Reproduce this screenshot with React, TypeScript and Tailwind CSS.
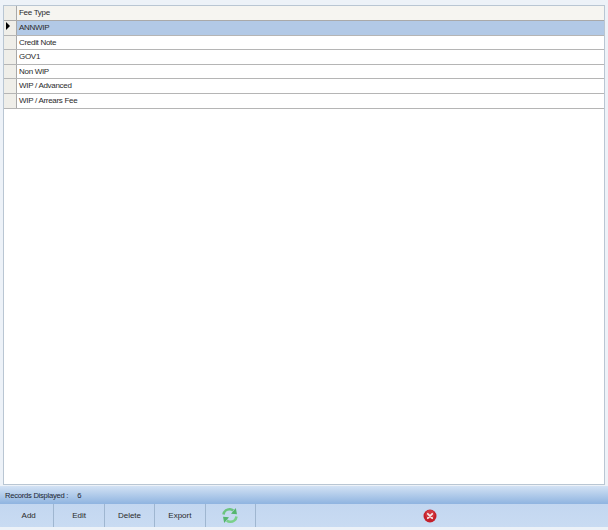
const rows = ["ANNWIP", "Credit Note", "GOV1", "Non WIP", "WIP / Advanced", "WIP / Arrears Fee"];
const buttons = ["Add", "Edit", "Delete", "Export"];

function RefreshIcon() {
  return (
    <svg width="18" height="17" viewBox="0 0 18 17" fill="none">
      <path d="M2.5 7.5 C3 4 6 2 9 2.2 C10.2 2.3 11.2 2.8 12.2 3.6" stroke="#6cc47f" strokeWidth="2.6" />
      <path d="M10 6.8 L16 7.2 L14.8 1 Z" fill="#55b56e" />
      <path d="M15.5 9.5 C15 13 12 15 9 14.8 C7.8 14.7 6.8 14.2 5.8 13.4" stroke="#7ad08a" strokeWidth="2.6" />
      <path d="M8 10.2 L2 9.8 L3.2 16 Z" fill="#55b56e" />
    </svg>
  );
}

function CloseIcon() {
  return (
    <svg width="14" height="14" viewBox="0 0 14 14">
      <circle cx="7" cy="7" r="6.5" fill="#c4202a" />
      <circle cx="7" cy="5.5" r="4.5" fill="#dc4a50" opacity="0.6" />
      <path d="M4.8 4.8 L9.2 9.2 M9.2 4.8 L4.8 9.2" stroke="#f7e8e8" strokeWidth="1.8" strokeLinecap="round" />
    </svg>
  );
}

export default function App() {
  return (
    <div className="flex h-[530px] w-[608px] flex-col bg-[#edf2f8] pb-[3px] pt-[5px] font-['Liberation_Sans',sans-serif] text-[8px] tracking-[-0.3px] text-[#2a2a2a]">
      {/* grid */}
      <div className="mx-[3px] h-[480px] border border-[#b9c6d3] bg-white">
        <div className="flex h-[15px] border-b border-[#a9a9a9] bg-[#f6f5f1]">
          <div className="w-[13px] border-r border-[#a9a9a9] bg-[#efeee9]" />
          <div className="pl-[2px] leading-[14px]">Fee Type</div>
        </div>
        {rows.map((row, i) => (
          <div key={row} className="flex h-[14.6px] border-b border-[#b5b5b5]">
            <div className="relative w-[13px] shrink-0 border-r border-[#a9a9a9] bg-[#efeee9]">
              {i === 0 && (
                <svg className="absolute left-[2px] top-[1px]" width="4" height="8" viewBox="0 0 4 8">
                  <path d="M0 0 L4 4 L0 8 Z" fill="#000" />
                </svg>
              )}
            </div>
            <div className={`flex-1 pl-[2px] leading-[13.6px] ${i === 0 ? "bg-[#b2c9e6]" : ""}`}>{row}</div>
          </div>
        ))}
      </div>

      {/* status */}
      <div className="mt-[1px] flex h-[18px] items-center gap-[9px] bg-gradient-to-b from-[#d3e2f4] to-[#8fb4e0] pl-[5px] pt-[2px] text-[7.6px] tracking-[-0.25px] text-[#1c2530]">
        <span>Records Displayed :</span>
        <span>6</span>
      </div>

      {/* toolbar */}
      <div className="flex h-[23px] bg-gradient-to-b from-[#c3d7f0] to-[#c9dbf2] tracking-normal">
        <div className="w-[4px] shrink-0" />
        {buttons.map((b) => (
          <div key={b} className="flex w-[50.4px] items-center justify-center border-r border-[#9fb6d0]">
            {b}
          </div>
        ))}
        <div className="flex w-[50.4px] items-center justify-center border-r border-[#9fb6d0]">
          <RefreshIcon />
        </div>
        <div className="flex flex-1 items-center justify-center pr-[4px]">
          <CloseIcon />
        </div>
      </div>
    </div>
  );
}
